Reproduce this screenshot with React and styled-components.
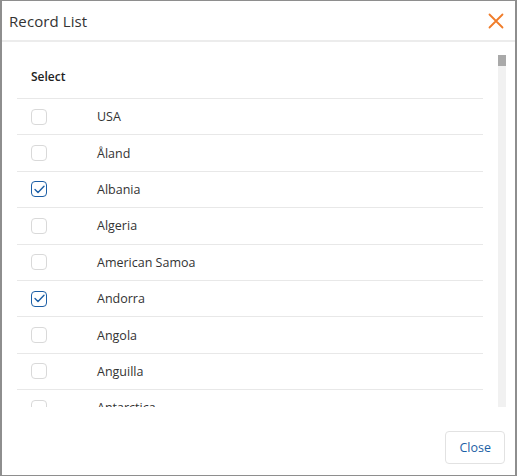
import React, { useState } from "react";
import styled, { createGlobalStyle } from "styled-components";

const COUNTRIES = [
  "USA", "Åland", "Albania", "Algeria", "American Samoa", "Andorra", "Angola",
  "Anguilla", "Antarctica", "Antigua and Barbuda", "Argentina", "Armenia",
  "Aruba", "Australia", "Austria", "Azerbaijan", "Bahamas", "Bahrain",
  "Bangladesh", "Barbados", "Belarus", "Belgium", "Belize", "Benin", "Bermuda",
  "Bhutan", "Bolivia", "Bosnia and Herzegovina", "Botswana", "Bouvet Island",
  "Brazil", "British Indian Ocean Territory", "Brunei", "Bulgaria",
  "Burkina Faso", "Burundi", "Cambodia", "Cameroon", "Canada", "Cape Verde",
  "Cayman Islands", "Central African Republic", "Chad", "Chile", "China",
  "Christmas Island", "Cocos Islands", "Colombia", "Comoros", "Congo",
  "Cook Islands", "Costa Rica", "Croatia", "Cuba", "Curaçao", "Cyprus",
  "Czechia", "Denmark", "Djibouti", "Dominica", "Dominican Republic", "Ecuador",
  "Egypt", "El Salvador", "Equatorial Guinea", "Eritrea", "Estonia", "Eswatini",
  "Ethiopia", "Falkland Islands", "Faroe Islands", "Fiji", "Finland", "France",
  "French Guiana", "French Polynesia", "Gabon", "Gambia", "Georgia", "Germany",
  "Ghana", "Gibraltar", "Greece", "Greenland", "Grenada", "Guadeloupe", "Guam",
  "Guatemala", "Guernsey", "Guinea", "Guinea-Bissau", "Guyana", "Haiti",
  "Honduras", "Hong Kong", "Hungary", "Iceland", "India", "Indonesia", "Iran",
  "Iraq", "Ireland", "Isle of Man", "Israel", "Italy", "Jamaica", "Japan",
  "Jersey", "Jordan", "Kazakhstan", "Kenya", "Kiribati", "Kuwait", "Kyrgyzstan",
  "Laos", "Latvia", "Lebanon", "Lesotho", "Liberia", "Libya", "Liechtenstein",
  "Lithuania", "Luxembourg", "Macao", "Madagascar", "Malawi", "Malaysia",
  "Maldives", "Mali", "Malta", "Marshall Islands", "Martinique", "Mauritania",
  "Mauritius", "Mayotte", "Mexico", "Micronesia", "Moldova", "Monaco",
  "Mongolia", "Montenegro", "Montserrat", "Morocco", "Mozambique", "Myanmar",
  "Namibia", "Nauru", "Nepal", "Netherlands", "New Caledonia", "New Zealand",
  "Nicaragua", "Niger", "Nigeria", "Niue", "Norfolk Island", "North Korea",
  "North Macedonia", "Norway", "Oman", "Pakistan", "Palau", "Palestine",
  "Panama", "Papua New Guinea", "Paraguay", "Peru", "Philippines", "Pitcairn",
  "Poland", "Portugal", "Puerto Rico", "Qatar", "Réunion", "Romania", "Russia",
  "Rwanda", "Saint Barthélemy", "Saint Helena", "Saint Kitts and Nevis",
  "Saint Lucia", "Saint Martin", "Samoa", "San Marino", "Saudi Arabia",
  "Senegal", "Serbia", "Seychelles", "Sierra Leone", "Singapore",
  "Sint Maarten", "Slovakia", "Slovenia", "Solomon Islands", "Somalia",
  "South Africa", "South Korea", "South Sudan", "Spain", "Sri Lanka", "Sudan",
  "Suriname", "Sweden", "Switzerland", "Syria", "Taiwan", "Tajikistan",
  "Tanzania", "Thailand", "Timor-Leste", "Togo", "Tokelau", "Tonga",
  "Trinidad and Tobago", "Tunisia", "Turkey", "Turkmenistan", "Tuvalu",
  "Uganda", "Ukraine", "United Arab Emirates", "United Kingdom", "Uruguay",
  "Uzbekistan", "Vanuatu", "Vatican City", "Venezuela", "Vietnam",
  "Wallis and Futuna", "Western Sahara", "Yemen", "Zambia", "Zimbabwe",
];

const GlobalStyle = createGlobalStyle`
  html, body {
    margin: 0;
    padding: 0;
    background: #ffffff;
  }
  * {
    box-sizing: border-box;
  }
`;

const Dialog = styled.div`
  width: 517px;
  height: 476px;
  display: flex;
  flex-direction: column;
  background: #ffffff;
  border: 1px solid #8e8e8e;
  border-left-width: 2px;
  border-right-width: 2px;
  font-family: "Open Sans", "Noto Sans", sans-serif;
  color: #333333;
`;

const Header = styled.div`
  height: 41px;
  flex: none;
  display: flex;
  align-items: center;
  justify-content: space-between;
  padding: 0 10px 0 7px;
  border-bottom: 2px solid #ececec;
`;

const Title = styled.h2`
  margin: 0;
  font-size: 15px;
  font-weight: 400;
  color: #333333;
  letter-spacing: 0.1px;
`;

const CloseIcon = styled.button`
  width: 18px;
  height: 18px;
  padding: 0;
  border: 0;
  background: none;
  display: flex;
  align-items: center;
  justify-content: center;
  cursor: pointer;
`;

const Body = styled.div`
  flex: none;
  padding: 13px 9px 0 15px;
  display: flex;
  gap: 15px;
`;

const Scroller = styled.div`
  flex: 1;
  height: 352px;
  overflow-y: auto;
  scrollbar-width: none;
  &::-webkit-scrollbar {
    display: none;
  }
`;

const Track = styled.div`
  flex: none;
  width: 8px;
  height: 352px;
  background: #f1f1f1;
`;

const Thumb = styled.div`
  height: 11px;
  background: #a9a9a9;
`;

const HeadRow = styled.div`
  height: 43px;
  display: flex;
  align-items: center;
  padding-left: 14px;
  font-size: 12px;
  font-weight: 600;
  color: #222222;
`;

const Row = styled.label`
  height: 36.4px;
  display: grid;
  grid-template-columns: 66px 1fr;
  align-items: center;
  padding-left: 14px;
  border-top: 1px solid #e8e8e8;
  font-size: 12.5px;
  color: #333333;
  cursor: pointer;
`;

const Box = styled.span`
  width: 16px;
  height: 16px;
  border-radius: 4px;
  border: 1.5px solid ${(p) => (p.$checked ? "#1c5fa6" : "#d9d9d9")};
  display: flex;
  align-items: center;
  justify-content: center;
  background: #ffffff;
`;

const Footer = styled.div`
  flex: 1;
  display: flex;
  align-items: flex-start;
  justify-content: flex-end;
  padding: 24px 10px 0 0;
`;

const Button = styled.button`
  height: 33px;
  padding: 0 13px;
  border: 1px solid #e2e2e2;
  border-radius: 4px;
  background: #ffffff;
  color: #1c5fa6;
  font-family: "Open Sans", "Noto Sans", sans-serif;
  font-size: 12.5px;
  cursor: pointer;
`;

const Check = () => (
  <svg width="11" height="9" viewBox="0 0 11 9" fill="none">
    <path d="M1 4.6 L4 7.6 L10 1.2" stroke="#1c5fa6" strokeWidth="1.4" strokeLinecap="round" strokeLinejoin="round" />
  </svg>
);

export default function App() {
  const [checked, setChecked] = useState({ Albania: true, Andorra: true });
  const toggle = (name) => setChecked((c) => ({ ...c, [name]: !c[name] }));

  return (
    <>
      <GlobalStyle />
      <Dialog>
        <Header>
          <Title>Record List</Title>
          <CloseIcon aria-label="Close">
            <svg width="16" height="16" viewBox="0 0 16 16">
              <path d="M1.5 1.5 L14.5 14.5 M14.5 1.5 L1.5 14.5" stroke="#f07c2a" strokeWidth="1.8" strokeLinecap="round" />
            </svg>
          </CloseIcon>
        </Header>
        <Body>
          <Scroller>
            <HeadRow>Select</HeadRow>
            {COUNTRIES.map((name) => (
              <Row key={name} onClick={() => toggle(name)}>
                <Box $checked={!!checked[name]}>{checked[name] && <Check />}</Box>
                <span>{name}</span>
              </Row>
            ))}
          </Scroller>
          <Track>
            <Thumb />
          </Track>
        </Body>
        <Footer>
          <Button>Close</Button>
        </Footer>
      </Dialog>
    </>
  );
}
